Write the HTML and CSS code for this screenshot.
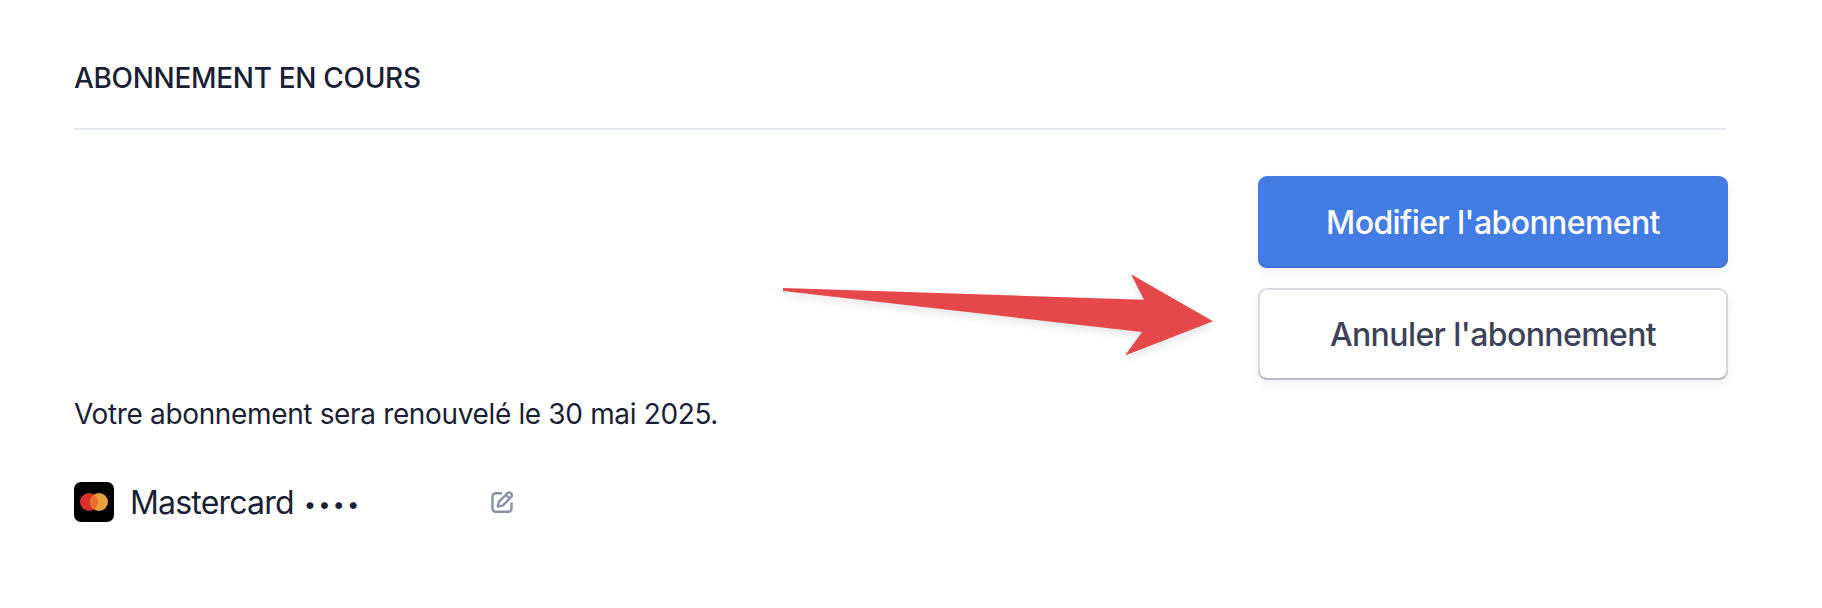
FILE: index.html
```
<!DOCTYPE html>
<html lang="fr">
<head>
    <meta charset="UTF-8">
    <meta name="viewport" content="width=device-width, initial-scale=1">
    <title>Abonnement</title>
    <link rel="stylesheet" href="styles.css">
</head>
<body>
<main class="subscription">
    <h2 class="section-title">ABONNEMENT EN COURS</h2>

    <div class="actions">
        <button class="button button-primary">Modifier l'abonnement</button>
        <button class="button button-secondary">Annuler l'abonnement</button>
        <svg class="arrow" width="460" height="110" viewBox="770 260 460 110">
            <path fill="#e4484b" d="M783 288 L1144 299.7 L1131 274.3 L1213 321.2 L1125 355.4 L1142 332 L783 291 Z"/>
        </svg>
    </div>

    <p class="renewal">Votre abonnement sera renouvelé le 30 mai 2025.</p>

    <div class="payment">
        <svg class="card-logo" width="40" height="40" viewBox="0 0 40 40">
            <rect width="40" height="40" rx="7" fill="#000"/>
            <circle cx="15" cy="20" r="9" fill="#d9302c"/>
            <circle cx="25" cy="20" r="9" fill="#e9a140"/>
            <path d="M20 12.5a9 9 0 0 1 0 15a9 9 0 0 1 0-15z" fill="#ed6f2d"/>
        </svg>
        <span class="card-name">Mastercard</span>
        <span class="card-dots">••••</span>
        <svg class="edit" width="24" height="24" viewBox="0 0 24 24" fill="none" stroke="#8792a2" stroke-width="2.4" stroke-linejoin="round">
            <path d="M12 3.2H5.8A3.3 3.3 0 0 0 2.5 6.5V18.5A3.3 3.3 0 0 0 5.8 21.8H18.2A3.3 3.3 0 0 0 21.5 18.5V12.5"/>
            <path d="M7.8 16.6L8.8 11.8L17.6 3A2.1 2.1 0 0 1 20.6 3L21.4 3.8A2.1 2.1 0 0 1 21.4 6.8L12.6 15.6Z M16 4.8L19.6 8.4"/>
        </svg>
    </div>
</main>
</body>
</html>
```

FILE: styles.css
```
body {
    margin: 0;
    background: #fff;
    color: #1a1f36;
    font-family: Inter, "Liberation Sans", sans-serif;
}
.subscription {
    padding: 58px 94px 0 74px;
}
.section-title {
    margin: 0 2px 0 0;
    height: 70px;
    border-bottom: 2px solid #e3e8ee;
    font-size: 28px;
    font-weight: 500;
    line-height: 41px;
    letter-spacing: -0.32px;
}
.actions {
    position: relative;
    display: flex;
    flex-direction: column;
    align-items: flex-end;
    gap: 20px;
    padding-top: 46px;
}
.button {
    width: 470px;
    height: 92px;
    padding: 2px 0 0;
    border: none;
    border-radius: 9px;
    font-family: inherit;
    font-size: 32px;
    font-weight: 500;
    line-height: 40px;
    letter-spacing: -0.6px;
    cursor: pointer;
}
.button-primary {
    background: #437de4;
    color: #fff;
    box-shadow: inset 0 -2px 1px #416fcb, 0 4px 10px rgba(60, 66, 87, 0.08);
}
.button-secondary {
    background: #fff;
    color: #3c4257;
    box-shadow: inset 0 -2px 1px #b9bac2, inset 0 0 0 2px #d9dae1, 0 4px 10px rgba(60, 66, 87, 0.08);
}
/* pointer drawn over the empty area beside the buttons */
.arrow {
    position: absolute;
    top: 130px;
    left: 696px;
    filter: drop-shadow(0 4px 4px rgba(0, 0, 0, 0.1));
}
.renewal {
    margin: 14px 0 0;
    font-size: 28px;
    line-height: 41px;
    letter-spacing: -0.35px;
}
.payment {
    display: flex;
    align-items: center;
    width: 440px;
    height: 40px;
    margin-top: 47px;
}
.card-name {
    margin-left: 16px;
    padding-top: 1px;
    font-size: 32px;
    letter-spacing: -0.8px;
}
.card-dots {
    margin-left: 10px;
    padding-top: 3px;
    font-size: 22px;
    letter-spacing: 2px;
}
.edit {
    margin-left: auto;
}
```
